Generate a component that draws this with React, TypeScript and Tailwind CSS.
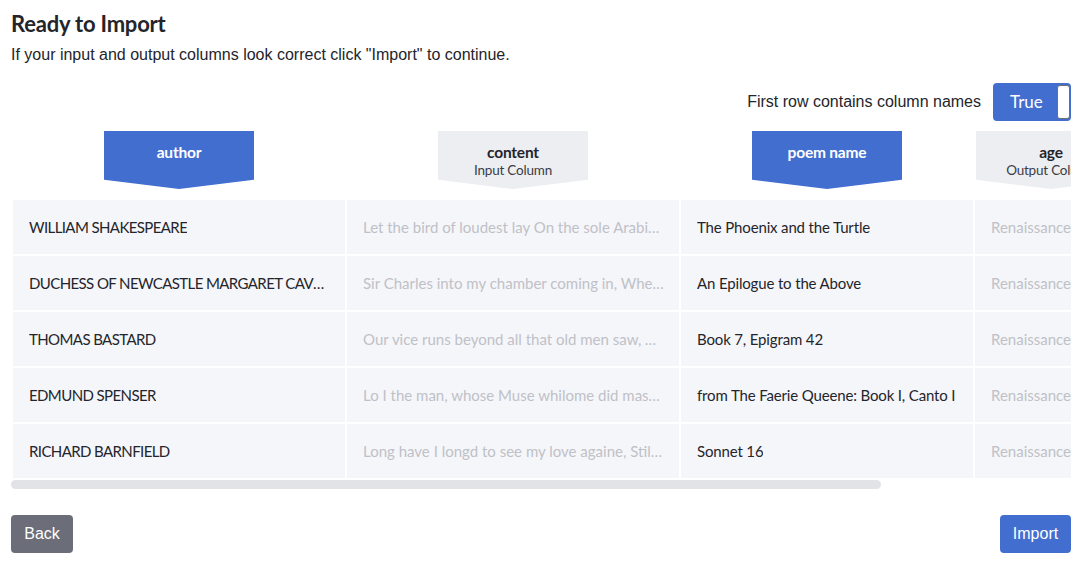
import React from 'react'

type Col = {
  name: string
  kind: 'mapped' | 'input' | 'output'
  width: string
  tracking: string
  cells: string[]
}

const columns: Col[] = [
  {
    name: 'author',
    kind: 'mapped',
    width: 'w-[332px]',
    tracking: 'tracking-[-0.6px]',
    cells: [
      'WILLIAM SHAKESPEARE',
      'DUCHESS OF NEWCASTLE MARGARET CAVENDISH',
      'THOMAS BASTARD',
      'EDMUND SPENSER',
      'RICHARD BARNFIELD',
    ],
  },
  {
    name: 'content',
    kind: 'input',
    width: 'w-[332px]',
    tracking: 'tracking-normal',
    cells: [
      'Let the bird of loudest lay On the sole Arabian tree',
      'Sir Charles into my chamber coming in, When I was writing of my Fairy Queen',
      'Our vice runs beyond all that old men saw, And far authentically above our laws',
      'Lo I the man, whose Muse whilome did maske, As time her taught in lowly Shepheards weeds',
      'Long have I longd to see my love againe, Still have I wisht, but never could obtaine it',
    ],
  },
  {
    name: 'poem name',
    kind: 'mapped',
    width: 'w-[292px]',
    tracking: 'tracking-[-0.15px]',
    cells: [
      'The Phoenix and the Turtle',
      'An Epilogue to the Above',
      'Book 7, Epigram 42',
      'from The Faerie Queene: Book I, Canto I',
      'Sonnet 16',
    ],
  },
  {
    name: 'age',
    kind: 'output',
    width: 'w-[152px]',
    tracking: 'tracking-normal',
    cells: ['Renaissance', 'Renaissance', 'Renaissance', 'Renaissance', 'Renaissance'],
  },
]

const font = { fontFamily: '"Source Sans Pro", Lato, "Noto Sans", sans-serif' }
const arial = { fontFamily: '"Liberation Sans", Arial, sans-serif' }

function ColumnHeader({ col }: { col: Col }) {
  const mapped = col.kind === 'mapped'
  return (
    <div className="flex h-[58px] justify-center">
      <div
        className={
          'flex w-[150px] shrink-0 flex-col items-center pt-[12px] [clip-path:polygon(0_0,100%_0,100%_84%,50%_100%,0_84%)] ' +
          (mapped ? 'bg-[#426fcf] text-white' : 'bg-[#eceef2] text-[#24252b]')
        }
      >
        <span className="text-[15.5px] leading-[19px] font-bold tracking-[-0.2px]">{col.name}</span>
        {!mapped && (
          <span className="text-[13.5px] leading-[17px] tracking-[-0.2px] text-[#3b3c44]">
            {col.kind === 'input' ? 'Input Column' : 'Output Column'}
          </span>
        )}
      </div>
    </div>
  )
}

export default function App() {
  return (
    <div className="h-[577px] w-[1087px] overflow-hidden bg-white text-[#24252b]">
      <div className="px-[11px] pt-[11px]">
        <h1 className="text-[22px] leading-[26px] font-bold tracking-[-0.2px] text-[#24252b]" style={font}>
          Ready to Import
        </h1>
        <p className="mt-[8px] text-[16px] leading-[20px] text-[#24252b]" style={arial}>
          If your input and output columns look correct click "Import" to continue.
        </p>

        <div className="mt-[18px] flex items-center justify-end gap-[12px] pr-[5px]">
          <span className="text-[16px] text-[#24252b]" style={arial}>
            First row contains column names
          </span>
          <button
            type="button"
            className="flex h-[38px] w-[78px] items-center justify-between rounded-[4px] bg-[#426fcf] pl-[17px] pr-[1px] text-[17px] text-white"
            style={font}
          >
            True
            <span className="h-[34px] w-[13px] rounded-[3px] border border-[#6d6f78] bg-white" />
          </button>
        </div>

        <div className="mt-[10px] w-[1060px] overflow-hidden pl-[2px]" style={font}>
          <div className="flex w-max gap-[2px]">
            {columns.map((col) => (
              <div key={col.name} className={'flex shrink-0 flex-col ' + col.width}>
                <ColumnHeader col={col} />
                <div className="mt-[11px] flex flex-col gap-[2px]">
                  {col.cells.map((cell, i) => (
                    <div
                      key={i}
                      className={
                        'flex h-[54px] items-center bg-[#f5f6fa] pl-[16px] pr-[14px] text-[15px] ' +
                        col.tracking +
                        ' ' +
                        (col.kind === 'mapped' ? 'text-[#24252b]' : 'text-[#bfc1c7]')
                      }
                    >
                      <span className={col.kind === 'output' ? 'whitespace-nowrap' : 'truncate'}>{cell}</span>
                    </div>
                  ))}
                </div>
              </div>
            ))}
          </div>
          <div className="mt-[2px] -ml-[2px] h-[9px] w-[870px] rounded-full bg-[#e2e3e7]" />
        </div>

        <div className="mt-[26px] flex items-center justify-between pr-[5px]" style={arial}>
          <button
            type="button"
            className="h-[38px] w-[62px] rounded-[4px] bg-[#6b6d78] text-[16px] text-white"
          >
            Back
          </button>
          <button
            type="button"
            className="h-[38px] w-[71px] rounded-[4px] bg-[#426fcf] text-[16px] text-white"
          >
            Import
          </button>
        </div>
      </div>
    </div>
  )
}
